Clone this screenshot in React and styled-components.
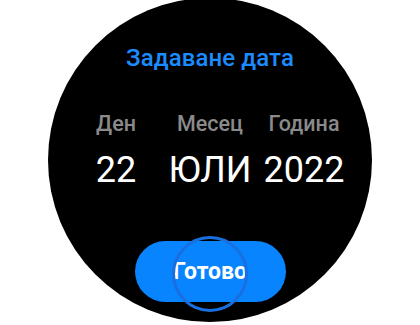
import React from "react";
import styled, { createGlobalStyle } from "styled-components";

const Global = createGlobalStyle`
  html, body { margin: 0; padding: 0; background: #ffffff; }
  body { font-family: Roboto, "Noto Sans", "Liberation Sans", sans-serif; }
`;

const Stage = styled.div`
  width: 420px;
  height: 325px;
  overflow: hidden;
  display: flex;
  justify-content: center;
  align-items: flex-start;
  background: #ffffff;
`;

const Watch = styled.div`
  flex: none;
  width: 324px;
  height: 324px;
  margin-top: -2px;
  border-radius: 50%;
  background: #000000;
  display: flex;
  flex-direction: column;
  align-items: center;
  box-sizing: border-box;
  padding-top: 46px;
`;

const Title = styled.div`
  font-size: 24px;
  line-height: 28px;
  font-weight: 500;
  color: #1a8cff;
  letter-spacing: 0.1px;
`;

const Columns = styled.div`
  display: grid;
  grid-template-columns: repeat(3, 94px);
  margin-top: 40px;
  row-gap: 12px;
`;

const Label = styled.div`
  text-align: center;
  font-size: 21.5px;
  line-height: 24px;
  font-weight: 500;
  color: #8a8a8a;
`;

const Value = styled.div`
  text-align: center;
  font-size: 36px;
  line-height: 44px;
  font-weight: 400;
  color: #ffffff;
`;

const DoneButton = styled.button`
  position: relative;
  margin-top: 49px;
  width: 151px;
  height: 61px;
  border: none;
  border-radius: 31px;
  background: #0784fe;
  color: #ffffff;
  font-family: inherit;
  font-size: 23px;
  font-weight: 700;
  padding: 0;
  display: flex;
  align-items: center;
  justify-content: center;
`;

const TouchRing = styled.span`
  position: absolute;
  left: 37px;
  top: -5px;
  width: 76px;
  height: 76px;
  box-sizing: border-box;
  border-radius: 50%;
  border: 3px solid #1a6fe0;
  pointer-events: none;
`;

const fields = [
  { label: "Ден", value: "22" },
  { label: "Месец", value: "ЮЛИ" },
  { label: "Година", value: "2022" },
];

export default function App() {
  return (
    <>
      <Global />
      <Stage>
        <Watch>
          <Title>Задаване дата</Title>
          <Columns>
            {fields.map((f) => (
              <Label key={f.label}>{f.label}</Label>
            ))}
            {fields.map((f) => (
              <Value key={f.label}>{f.value}</Value>
            ))}
          </Columns>
          <DoneButton>
            Готово
            <TouchRing />
          </DoneButton>
        </Watch>
      </Stage>
    </>
  );
}
